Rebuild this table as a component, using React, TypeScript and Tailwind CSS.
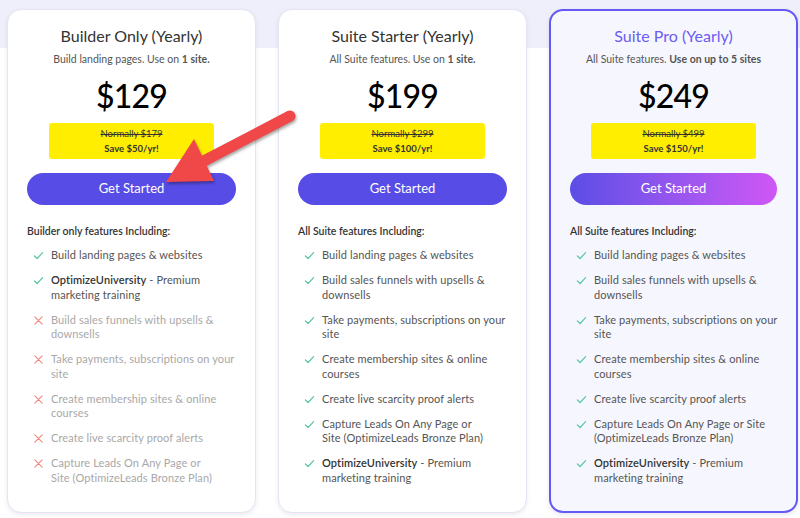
import { ReactNode } from "react";

type Feature = { lines: ReactNode[]; on: boolean };

interface Plan {
  name: string;
  subtitle: ReactNode;
  price: string;
  normally: string;
  save: string;
  heading: string;
  features: Feature[];
  pro?: boolean;
}

const univ: ReactNode[] = [
  <>
    <span className="font-semibold text-[#333]">OptimizeUniversity</span> - Premium
  </>,
  "marketing training",
];

const suiteFeatures = (leads: string[]): Feature[] => [
  { lines: ["Build landing pages & websites"], on: true },
  { lines: ["Build sales funnels with upsells &", "downsells"], on: true },
  { lines: ["Take payments, subscriptions on your", "site"], on: true },
  { lines: ["Create membership sites & online", "courses"], on: true },
  { lines: ["Create live scarcity proof alerts"], on: true },
  { lines: leads, on: true },
  { lines: univ, on: true },
];

const PLANS: Plan[] = [
  {
    name: "Builder Only (Yearly)",
    subtitle: (
      <>
        Build landing pages. Use on <b className="font-bold">1 site.</b>
      </>
    ),
    price: "$129",
    normally: "Normally $179",
    save: "Save $50/yr!",
    heading: "Builder only features Including:",
    features: [
      { lines: ["Build landing pages & websites"], on: true },
      { lines: univ, on: true },
      { lines: ["Build sales funnels with upsells &", "downsells"], on: false },
      { lines: ["Take payments, subscriptions on your", "site"], on: false },
      { lines: ["Create membership sites & online", "courses"], on: false },
      { lines: ["Create live scarcity proof alerts"], on: false },
      { lines: ["Capture Leads On Any Page or", "Site (OptimizeLeads Bronze Plan)"], on: false },
    ],
  },
  {
    name: "Suite Starter (Yearly)",
    subtitle: (
      <>
        All Suite features. Use on <b className="font-bold">1 site.</b>
      </>
    ),
    price: "$199",
    normally: "Normally $299",
    save: "Save $100/yr!",
    heading: "All Suite features Including:",
    features: suiteFeatures(["Capture Leads On Any Page or", "Site (OptimizeLeads Bronze Plan)"]),
  },
  {
    name: "Suite Pro (Yearly)",
    subtitle: (
      <>
        All Suite features. <b className="font-bold">Use on up to 5 sites</b>
      </>
    ),
    price: "$249",
    normally: "Normally $499",
    save: "Save $150/yr!",
    heading: "All Suite features Including:",
    features: suiteFeatures(["Capture Leads On Any Page or Site", "(OptimizeLeads Bronze Plan)"]),
    pro: true,
  },
];

function Check() {
  return (
    <svg width="11" height="11" viewBox="0 0 12 12" fill="none" className="mt-[2px] shrink-0">
      <path d="M1.5 6.5 L4.5 9.3 L10.5 2.8" stroke="#5cc6a0" strokeWidth="1.3" strokeLinecap="round" strokeLinejoin="round" />
    </svg>
  );
}

function Cross() {
  return (
    <svg width="11" height="11" viewBox="0 0 12 12" fill="none" className="mt-[2px] shrink-0">
      <path d="M2 2 L10 10 M10 2 L2 10" stroke="#f0857a" strokeWidth="1.2" strokeLinecap="round" />
    </svg>
  );
}

function PlanCard({ plan }: { plan: Plan }) {
  return (
    <div
      className={
        plan.pro
          ? "flex h-[504px] flex-col rounded-[14px] border-2 border-[#6658f4] bg-[#f6f7fe] px-[19px] pt-[13px] shadow-[0_2px_4px_rgba(60,60,120,0.12)]"
          : "flex h-[504px] flex-col rounded-[14px] border border-[#e3e5f2] bg-white px-[19px] pt-[14px] shadow-[0_2px_4px_rgba(60,60,120,0.10)]"
      }
    >
      <h2
        className={
          plan.pro
            ? "text-center text-[16px] leading-[24px] text-[#6b5cf2]"
            : "text-center text-[16px] leading-[24px] text-[#333]"
        }
      >
        {plan.name}
      </h2>
      <p className="mt-[3px] text-center text-[10.5px] leading-[16px] text-[#555]">{plan.subtitle}</p>
      <div className="mt-[7px] text-center text-[32px] font-medium leading-[44px] tracking-[-0.8px] text-black">
        {plan.price}
      </div>
      <div className="mx-auto mt-[5px] flex h-[36px] w-[165px] flex-col items-center justify-center rounded-[3px] bg-[#ffee00] text-[9.5px] leading-[15px] text-[#333]">
        <span className="line-through">{plan.normally}</span>
        <span className="font-bold">{plan.save}</span>
      </div>
      <button
        className={
          plan.pro
            ? "mt-[14px] h-[32px] w-full rounded-full bg-gradient-to-r from-[#5a4de6] to-[#cf56f6] text-[13px] text-white"
            : "mt-[14px] h-[32px] w-full rounded-full bg-[#584ce6] text-[13px] text-white"
        }
      >
        Get Started
      </button>
      <div className="mt-[18px] text-[10.5px] font-semibold leading-[16px] text-[#333]">{plan.heading}</div>
      <ul className="mt-[9px] flex flex-col gap-[10.5px] pl-[6px]">
        {plan.features.map((f, i) => (
          <li key={i} className="flex gap-[7px]">
            {f.on ? <Check /> : <Cross />}
            <div
              className={
                f.on
                  ? "flex flex-col text-[11px] leading-[14.5px] tracking-[0.1px] text-[#555]"
                  : "flex flex-col text-[11px] leading-[14.5px] tracking-[0.1px] text-[#a8a8a8]"
              }
            >
              {f.lines.map((l, j) => (
                <span key={j} className="whitespace-nowrap">
                  {l}
                </span>
              ))}
            </div>
          </li>
        ))}
      </ul>
    </div>
  );
}

export default function App() {
  return (
    <div
      className="relative h-[518px] w-[800px] overflow-hidden bg-[linear-gradient(#efeffb_0px,#efeffb_48px,#ffffff_48px)]"
      style={{ fontFamily: "Lato, 'Open Sans', sans-serif" }}
    >
      <div className="grid grid-cols-3 gap-[22px] pl-[7px] pr-[2px] pt-[9px]">
        {PLANS.map((p) => (
          <PlanCard key={p.name} plan={p} />
        ))}
      </div>

      {/* red annotation arrow */}
      <svg
        className="pointer-events-none absolute left-0 top-0"
        width="800"
        height="518"
        viewBox="0 0 800 518"
        style={{ filter: "drop-shadow(1px 2px 1.5px rgba(0,0,0,0.35))" }}
      >
        <line x1="290" y1="116" x2="200" y2="163" stroke="#f04848" strokeWidth="11" strokeLinecap="round" />
        <polygon points="166,182 194,139 214,181" fill="#f04848" />
      </svg>
    </div>
  );
}
